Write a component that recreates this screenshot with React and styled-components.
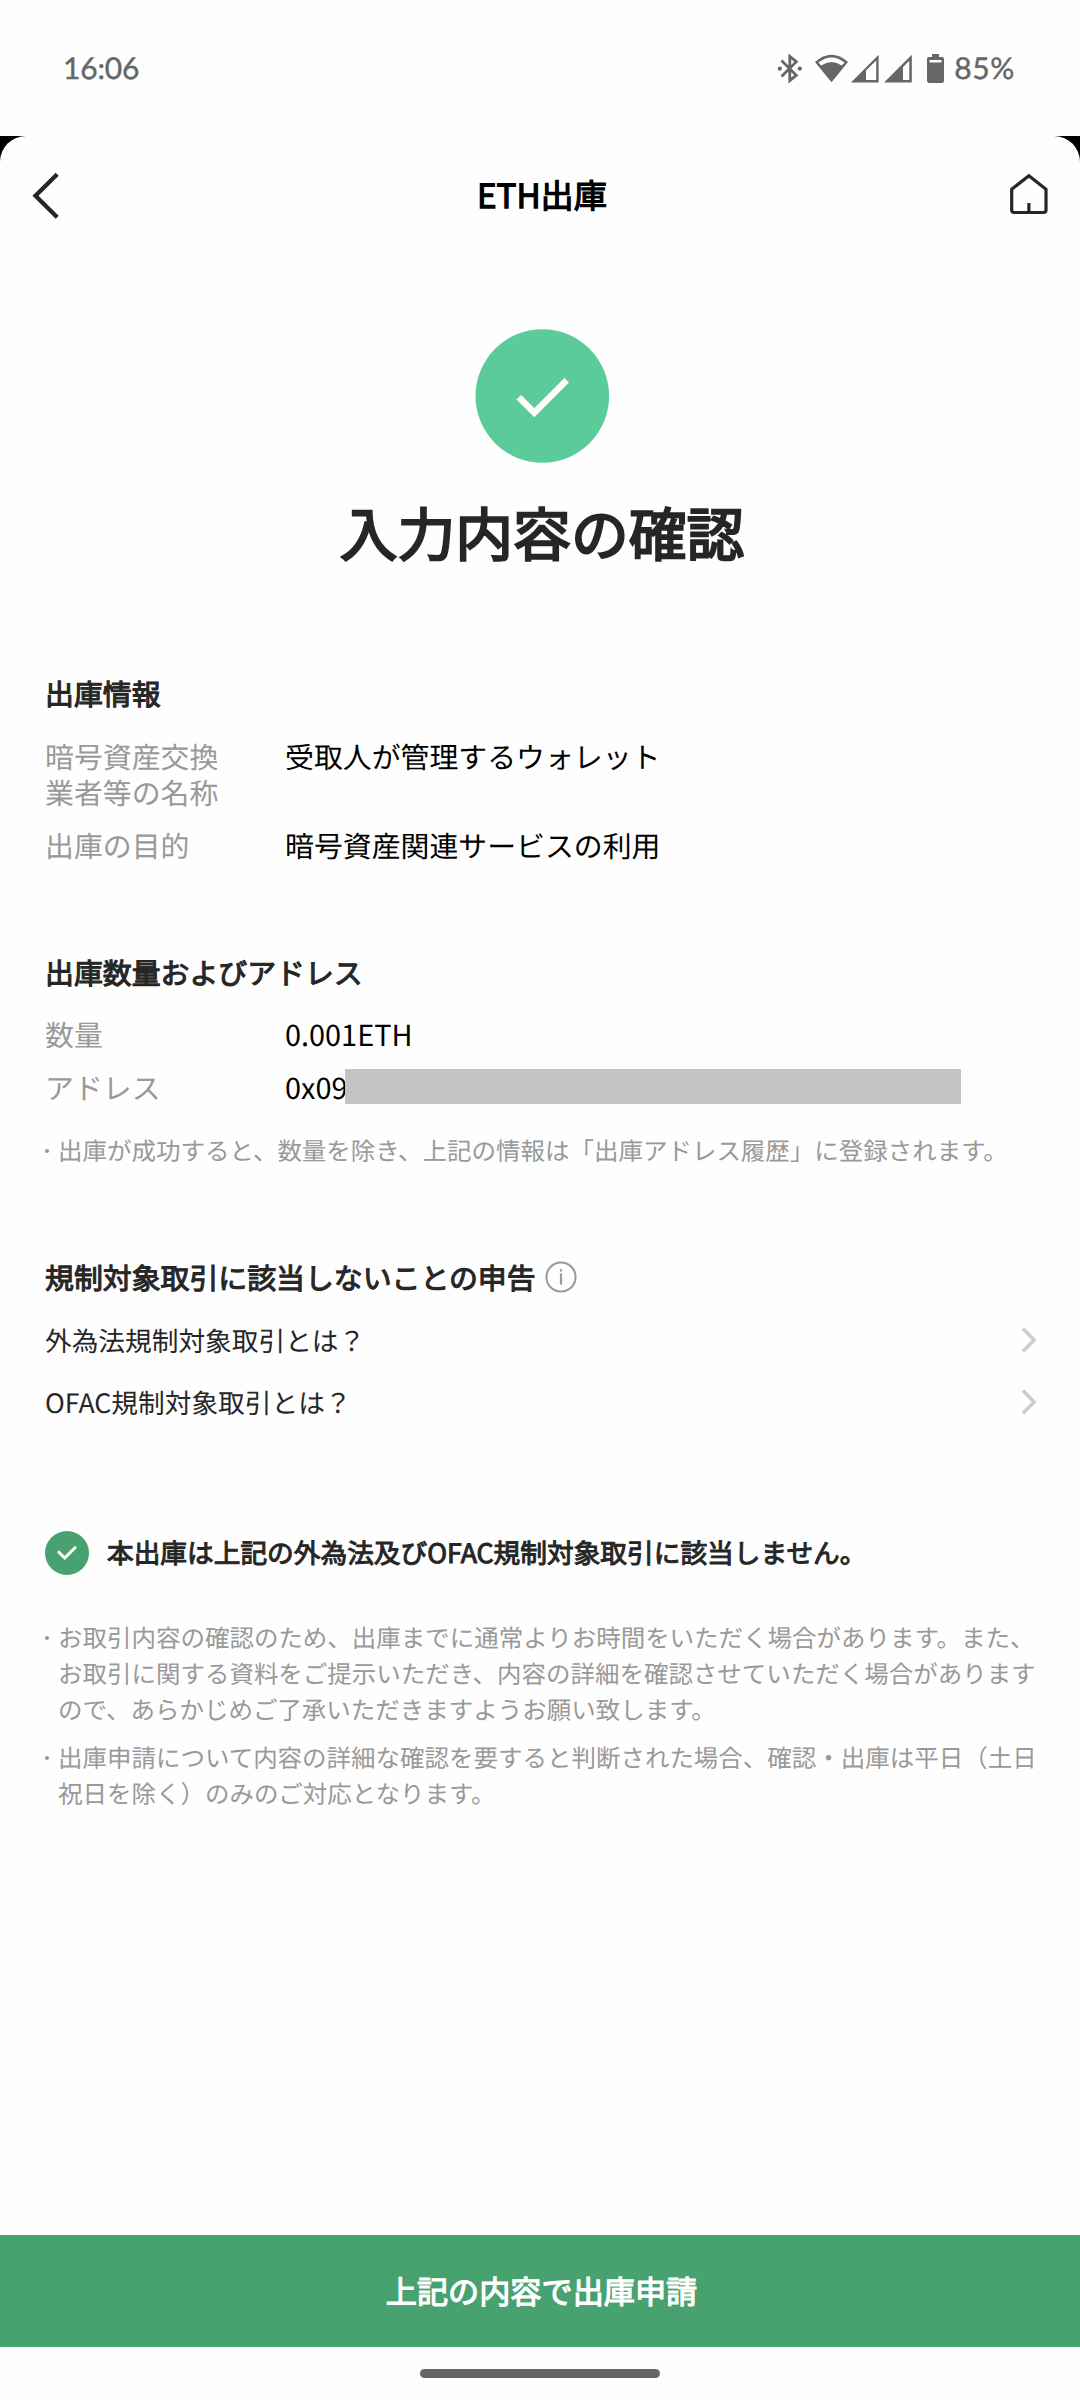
import React from "react";
import styled, { createGlobalStyle } from "styled-components";

const GlobalStyle = createGlobalStyle`
  * { box-sizing: border-box; }
  body {
    margin: 0;
    background: #fefefe;
    font-family: "Noto Sans CJK JP", "Noto Sans", sans-serif;
    text-rendering: geometricPrecision;
    -webkit-font-smoothing: antialiased;
  }
  h1, h2, p, ul, dl, dt, dd { margin: 0; padding: 0; font-weight: 400; }
`;

const Screen = styled.div`
  width: 1080px;
  height: 2400px;
  display: flex;
  flex-direction: column;
  overflow: hidden;
`;

const StatusBar = styled.div`
  height: 136px;
  padding: 0 65px 0 63px;
  display: flex;
  align-items: center;
  justify-content: space-between;
  color: #666;
  font-family: Lato, sans-serif;
  font-size: 30px;
  line-height: 36px;
`;

const StatusText = styled.span`
  letter-spacing: ${(p) => p.$spacing}px;
  -webkit-text-stroke: 0.4px currentColor;
`;

const StatusIcons = styled.div`
  display: flex;
  align-items: center;
`;

const StatusGlyphs = styled.svg`
  display: block;
  width: 170px;
  height: 32px;
  margin-right: 7px;
`;

const PanelBackdrop = styled.div`
  flex: 1;
  display: flex;
  background: linear-gradient(#000 0 60px, #fefefe 60px);
`;

const Panel = styled.div`
  flex: 1;
  display: flex;
  flex-direction: column;
  background: #fefefe;
  border-radius: 26px 26px 0 0;
`;

const Header = styled.header`
  height: 116px;
  padding: 2px 30px 0 30px;
  display: grid;
  grid-template-columns: 48px 1fr 42px;
  align-items: center;
`;

const HeaderTitle = styled.h1`
  text-align: center;
  font-size: 33.2px;
  line-height: 44px;
  margin: -3px 0 0 -2px;
  color: #000;
  -webkit-text-stroke: 0.038em currentColor;
`;

const Icon = styled.svg`
  display: block;
  flex: none;
`;

const Hero = styled.section`
  padding: 77px 0 0 4px;
  display: flex;
  flex-direction: column;
  align-items: center;
`;

const HeroTitle = styled.h2`
  margin-top: 28px;
  font-size: 57.8px;
  line-height: 80px;
  color: #262626;
  -webkit-text-stroke: 0.038em currentColor;
`;

const Section = styled.section`
  padding: 0 40px 0 45px;
  margin-top: ${(p) => p.$top}px;
`;

const SectionTitle = styled.h2`
  display: flex;
  align-items: center;
  gap: 9px;
  font-size: 28.88px;
  line-height: 36px;
  color: #262626;
  -webkit-text-stroke: 0.038em currentColor;
`;

const Details = styled.dl`
  margin-top: ${(p) => p.$top}px;
  display: grid;
  grid-template-columns: 240px 1fr;
  row-gap: 16.5px;
  font-size: 28.88px;
  line-height: 36px;
`;

const Label = styled.dt`
  width: 180px;
  color: #999;
`;

const Value = styled.dd`
  display: flex;
  align-items: flex-start;
  color: #000;
`;

const AddressStart = styled.span`
  width: 60px;
  white-space: nowrap;
`;

const Redaction = styled.span`
  width: 616px;
  height: 35px;
  background: #c3c3c3;
`;

const Notes = styled.ul`
  list-style: none;
  margin-top: ${(p) => p.$top}px;
  display: flex;
  flex-direction: column;
  gap: 12.5px;
`;

const Note = styled.li`
  display: flex;
  font-size: 24.49px;
  line-height: 35.9px;
  color: #999;

  &::before {
    content: "";
    flex: none;
    width: 4px;
    height: 4px;
    margin: 16px 9px 0 0;
    border-radius: 50%;
    background: #999;
  }
`;

const Links = styled.div`
  margin-top: 13.5px;
`;

const LinkRow = styled.div`
  height: 62px;
  display: flex;
  align-items: center;
  justify-content: space-between;
  padding-right: 2px;
  font-size: 26.7px;
  line-height: 36px;
  color: #262626;
`;

const Agreement = styled.div`
  display: flex;
  align-items: center;
  gap: 18px;
  height: 44px;
  font-size: 26.7px;
  line-height: 36px;
  color: #262626;
  -webkit-text-stroke: 0.038em currentColor;
`;

const AgreementText = styled.span`
  margin-top: -1px;
`;

const SubmitButton = styled.button`
  height: 112px;
  margin-top: auto;
  padding: 0 0 3px 3px;
  border: 0;
  background: #48a270;
  color: #fff;
  font-family: inherit;
  font-size: 31.15px;
  line-height: 44px;
  -webkit-text-stroke: 0.038em currentColor;
`;

const GestureBar = styled.div`
  height: 53px;
  padding-top: 22px;
  display: flex;
  justify-content: center;
`;

const GesturePill = styled.div`
  width: 240px;
  height: 9px;
  border-radius: 5px;
  background: #666;
`;

function DeviceStatus() {
  return (
    <StatusGlyphs viewBox="777 52 170 32">
      <g fill="none" stroke="#666" strokeWidth="2.8">
        <path d="M781.500 60.500 L796.300 75.300 L789.800 80.500 V56.500 L796.300 61.700 L781.500 76.500" />
      </g>
      <circle cx="779.800" cy="68.700" r="2.100" fill="#666" />
      <circle cx="799.800" cy="68.700" r="2.100" fill="#666" />
      <path d="M831.500 82.300 L815 62 Q831.500 47.500 848 62 Z" fill="#666" />
      <path d="M818.300 62.600 Q831.500 52.300 844.700 62.600 L841.800 65.600 Q831.500 58.500 821.200 65.600 Z" fill="#fefefe" />
      <path d="M851 82.500 L878.600 54.800 V82.500 Z M866 70.600 V80 H876.200 V60.500 Z" fill="#666" fillRule="evenodd" />
      <path d="M884 82.500 L911.800 54.800 V82.500 Z M903 67 V80 H909.300 V60.700 Z" fill="#666" fillRule="evenodd" />
      <path d="M932 54 H939 V57 H942 Q944 57 944 59 V80.700 Q944 83 941.700 83 H929.300 Q927 83 927 80.700 V59 Q927 57 929 57 H932 Z M929.500 60 V62.500 H941.500 V60 Z" fill="#666" fillRule="evenodd" />
    </StatusGlyphs>
  );
}

function BackIcon() {
  return (
    <Icon width="30" height="48" viewBox="30 171 30 48">
      <path d="M57.200 174.200 L35.500 195.700 L57.200 217.300" fill="none" stroke="#262626" strokeWidth="4.300" />
    </Icon>
  );
}

function HomeIcon() {
  return (
    <Icon width="42" height="44" viewBox="1008 173 42 44">
      <path
        d="M1028.900 175.800 L1046 189.200 V210 Q1046 212.500 1043.500 212.500 H1014.200 Q1011.700 212.500 1011.700 210 V189.200 Z M1028.900 203 V212"
        fill="none"
        stroke="#262626"
        strokeWidth="3.200"
      />
    </Icon>
  );
}

function HeroCheck() {
  return (
    <Icon width="134" height="134" viewBox="475 329 134 134">
      <circle cx="542.300" cy="396" r="66.800" fill="#5bcc99" />
      <path d="M518.800 397.200 L534.300 412.700 L566.700 380.300" fill="none" stroke="#fff" strokeWidth="6.500" />
    </Icon>
  );
}

function InfoIcon() {
  return (
    <Icon width="32" height="32" viewBox="0 0 32 32">
      <circle cx="16" cy="16" r="14.600" fill="none" stroke="#999" strokeWidth="2" />
      <path d="M16 12.500 V23.500 M16 8.200 V10.500" stroke="#999" strokeWidth="2.200" fill="none" />
    </Icon>
  );
}

function ChevronIcon() {
  return (
    <Icon width="17" height="28" viewBox="0 0 17 28">
      <path d="M2 2.500 L13 14 L2 25.500" fill="none" stroke="#ccc" strokeWidth="3.500" />
    </Icon>
  );
}

function CheckedIcon() {
  return (
    <Icon width="44" height="44" viewBox="45 1531 44 44">
      <circle cx="67" cy="1553" r="22" fill="#48a270" />
      <path
        d="M58.900 1552.200 L64.700 1558 L75 1547.700"
        fill="none"
        stroke="#fff"
        strokeWidth="3"
        strokeLinecap="round"
      />
    </Icon>
  );
}

export default function App() {
  return (
    <>
      <GlobalStyle />
      <Screen lang="ja">
        <StatusBar>
          <StatusText $spacing={-0.2}>16:06</StatusText>
          <StatusIcons>
            <DeviceStatus />
            <StatusText $spacing={0.6}>85%</StatusText>
          </StatusIcons>
        </StatusBar>
        <PanelBackdrop>
          <Panel>
            <Header>
              <BackIcon />
              <HeaderTitle>ETH出庫</HeaderTitle>
              <HomeIcon />
            </Header>

            <Hero>
              <HeroCheck />
              <HeroTitle>入力内容の確認</HeroTitle>
            </Hero>

            <Section $top={104}>
              <SectionTitle>出庫情報</SectionTitle>
              <Details $top={27}>
                <Label>暗号資産交換業者等の名称</Label>
                <Value>受取人が管理するウォレット</Value>
                <Label>出庫の目的</Label>
                <Value>暗号資産関連サービスの利用</Value>
              </Details>
            </Section>

            <Section $top={91}>
              <SectionTitle>出庫数量およびアドレス</SectionTitle>
              <Details $top={26.5}>
                <Label>数量</Label>
                <Value>0.001ETH</Value>
                <Label>アドレス</Label>
                <Value>
                  <AddressStart>0x09</AddressStart>
                  <Redaction />
                </Value>
              </Details>
              <Notes $top={28}>
                <Note>出庫が成功すると、数量を除き、上記の情報は「出庫アドレス履歴」に登録されます。</Note>
              </Notes>
            </Section>

            <Section $top={91}>
              <SectionTitle>
                規制対象取引に該当しないことの申告
                <InfoIcon />
              </SectionTitle>
              <Links>
                <LinkRow>
                  外為法規制対象取引とは？
                  <ChevronIcon />
                </LinkRow>
                <LinkRow>
                  OFAC規制対象取引とは？
                  <ChevronIcon />
                </LinkRow>
              </Links>
            </Section>

            <Section $top={98}>
              <Agreement>
                <CheckedIcon />
                <AgreementText>本出庫は上記の外為法及びOFAC規制対象取引に該当しません。</AgreementText>
              </Agreement>
              <Notes $top={45}>
                <Note>
                  お取引内容の確認のため、出庫までに通常よりお時間をいただく場合があります。また、お取引に関する資料をご提示いただき、内容の詳細を確認させていただく場合がありますので、あらかじめご了承いただきますようお願い致します。
                </Note>
                <Note>
                  出庫申請について内容の詳細な確認を要すると判断された場合、確認・出庫は平日（土日祝日を除く）のみのご対応となります。
                </Note>
              </Notes>
            </Section>

            <SubmitButton>上記の内容で出庫申請</SubmitButton>
            <GestureBar>
              <GesturePill />
            </GestureBar>
          </Panel>
        </PanelBackdrop>
      </Screen>
    </>
  );
}
